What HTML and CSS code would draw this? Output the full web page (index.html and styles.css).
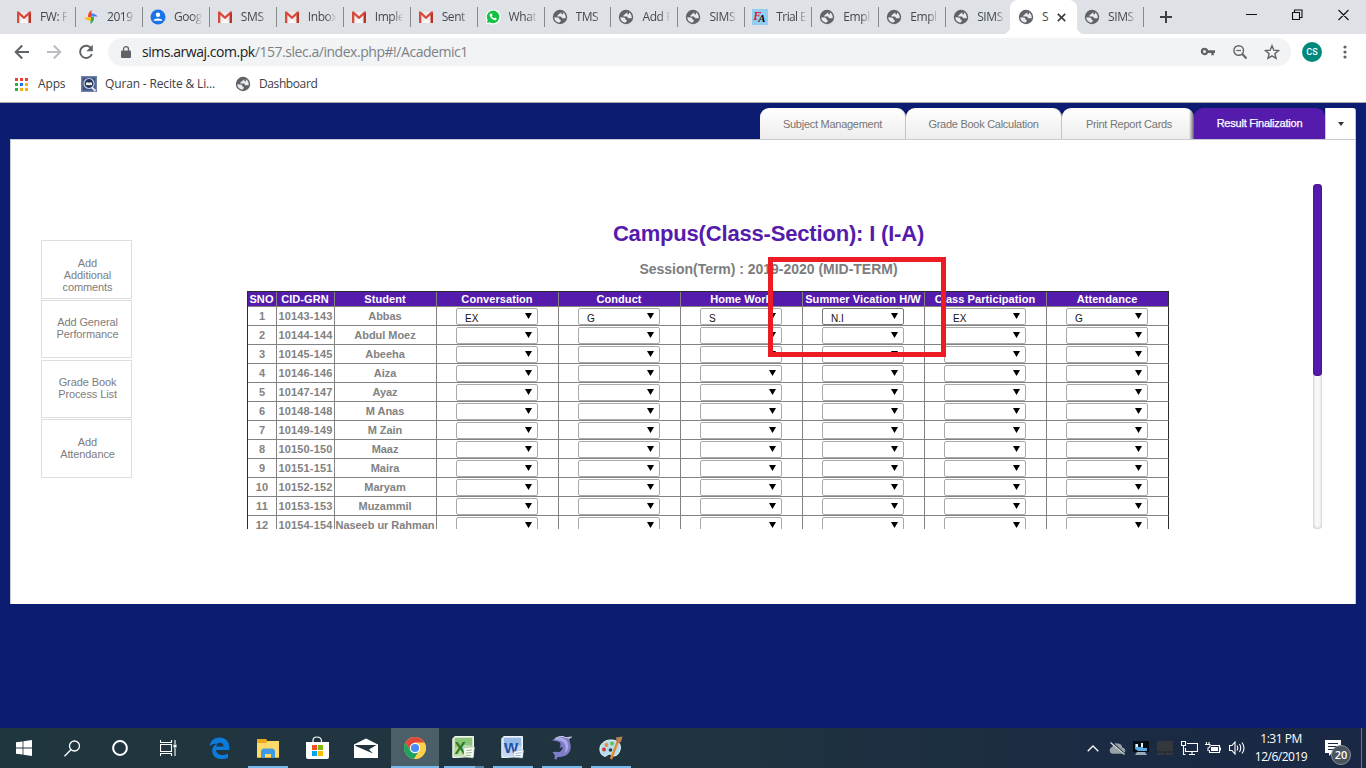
FILE: index.html
```html
<!DOCTYPE html>
<html lang="en">
<head>
<meta charset="utf-8">
<title>SIMS</title>
<link rel="stylesheet" href="styles.css">
</head>
<body>
<svg class="defs" aria-hidden="true">
  <symbol id="gmail" viewBox="0 0 16 16"><path d="M2 3h12v11H2z" fill="#eceaea"/><path d="M4 14l4-5 4 5z" fill="#fafafa"/><path d="M1 14V2.4h1.8L8 7.2l5.2-4.8H15V14h-2.3V6L8 10.2 3.3 6v8z" fill="#d84a3c"/><path d="M12.7 14V6L15 3.5V14z" fill="#b93327"/></symbol>
  <symbol id="globe" viewBox="0 0 16 16"><circle cx="8" cy="8" r="7.200" fill="#5f6368"/><path d="M9 2.300C9.300 4 8.300 4.600 7.200 4.700 6.500 5 6.800 6 5.700 6.200 4.800 6.500 5.200 7.500 6 7.500H8.600C9.800 7.600 9.300 9 10.300 9.200L13.700 9.300C14 6.500 12.800 4.300 11 3.200 11.500 5 10.700 5.800 9.600 5.300L9.300 4.300M2.300 8.300L5.500 8.600C6.900 8.700 7.700 9.600 7.500 10.800 8.700 10.800 9 11.300 8.700 12.200L7.300 13.700C4.500 13.300 2.300 11.500 2.300 8.300z" fill="#e8eaed"/></symbol>
  <symbol id="photos" viewBox="0 0 16 16"><path d="M8.500 1v7H5C5 4.500 6 3 8.500 1z" fill="#ea4335"/><path d="M8 7.500V4.500C11 4 13 5.500 15 7.500z" fill="#4285f4"/><path d="M7.500 8h3.500C11.500 11.500 10 13 7.500 15z" fill="#34a853"/><path d="M8 8.500v3C4.500 12 3 10.500 1 8.500z" fill="#fbbc04"/></symbol>
  <symbol id="contact" viewBox="0 0 16 16"><circle cx="8" cy="8" r="7.500" fill="#1a73e8"/><circle cx="8" cy="5.700" r="2.200" fill="#fff"/><path d="M3.700 11.800c0-3 8.600-3 8.600 0z" fill="#fff"/></symbol>
  <symbol id="whats" viewBox="0 0 16 16"><path d="M.5 15.500l1-4.200A7.500 7.500 0 1 1 4.800 14.700z" fill="#fff"/><circle cx="8.100" cy="7.900" r="6.300" fill="#14c144"/><path d="M2 14l1-4 3 3z" fill="#14c144"/><path d="M5.600 4.500l1.200.1.700 1.700-.7.900c.5 1 1.200 1.700 2.300 2.200l.9-.9 1.700.9c0 1.300-1 1.900-2.100 1.700C7 10.600 5 8.400 4.600 6.200c0-.8.400-1.400 1-1.700z" fill="#fff"/></symbol>
</svg>

<header class="tabstrip">
  <div class="tab"><svg class="fav"><use href="#gmail"/></svg><span>FW: F</span></div>
  <div class="tab"><svg class="fav"><use href="#photos"/></svg><span>2019</span></div>
  <div class="tab"><svg class="fav"><use href="#contact"/></svg><span>Goog</span></div>
  <div class="tab"><svg class="fav"><use href="#gmail"/></svg><span>SMS</span></div>
  <div class="tab"><svg class="fav"><use href="#gmail"/></svg><span>Inbox</span></div>
  <div class="tab"><svg class="fav"><use href="#gmail"/></svg><span>Imple</span></div>
  <div class="tab"><svg class="fav"><use href="#gmail"/></svg><span>Sent</span></div>
  <div class="tab"><svg class="fav"><use href="#whats"/></svg><span>What</span></div>
  <div class="tab"><svg class="fav"><use href="#globe"/></svg><span>TMS</span></div>
  <div class="tab"><svg class="fav"><use href="#globe"/></svg><span>Add F</span></div>
  <div class="tab"><svg class="fav"><use href="#globe"/></svg><span>SIMS</span></div>
  <div class="tab"><b class="fav fa"><i>F</i><em>A</em></b><span class="tight">Trial E</span></div>
  <div class="tab"><svg class="fav"><use href="#globe"/></svg><span>Empl</span></div>
  <div class="tab"><svg class="fav"><use href="#globe"/></svg><span>Empl</span></div>
  <div class="tab bare"><svg class="fav"><use href="#globe"/></svg><span>SIMS</span></div>
  <div class="tab active"><svg class="fav"><use href="#globe"/></svg><span>S</span><svg class="close" viewBox="0 0 8 8"><path d="M.7.7l6.600 6.600M7.300.7L.7 7.300" stroke="#3c4043" stroke-width="1.500"/></svg></div>
  <div class="tab"><svg class="fav"><use href="#globe"/></svg><span>SIMS</span></div>
  <svg class="plus" viewBox="0 0 12 12"><path d="M6 0v12M0 6h12" stroke="#3c4043" stroke-width="2"/></svg>
  <svg class="winctl" viewBox="0 0 138 30"><path d="M18 14.500h11M64.500 12.500h7v7h-7zM66.500 12v-2h7.500v7.500H72M110.500 10l10 10M120.500 10l-10 10" fill="none" stroke="#111" stroke-width="1.100"/></svg>
</header>

<div class="toolbar">
  <svg class="nav" viewBox="0 0 16 16"><path d="M15 8H2M8.200 1.500L1.700 8l6.500 6.500" fill="none" stroke="#5f6368" stroke-width="2"/></svg>
  <svg class="nav" viewBox="0 0 16 16"><path d="M1 8h13M7.800 1.500L14.300 8l-6.500 6.500" fill="none" stroke="#bbbdc0" stroke-width="2"/></svg>
  <svg class="nav" viewBox="0 0 16 16"><path d="M13.300 4.500A6.100 6.100 0 1 0 13.900 10" fill="none" stroke="#5f6368" stroke-width="2"/><path d="M14.800.8v6.500H8.300z" fill="#5f6368"/></svg>
  <div class="omnibox">
    <svg class="lock" viewBox="0 0 10 12"><path d="M1 4.500h8q1 0 1 1V11q0 1-1 1H1q-1 0-1-1V5.500q0-1 1-1z" fill="#5f6368"/><path d="M2.500 5V3a2.500 2.300 0 0 1 5 0v2" fill="none" stroke="#5f6368" stroke-width="1.300"/></svg>
    <span class="url"><b>sims.arwaj.com.pk</b>/157.slec.a/index.php#!/Academic1</span>
    <svg class="omni" viewBox="0 0 16 16"><circle cx="4.500" cy="7.500" r="2.600" fill="none" stroke="#5f6368" stroke-width="2.200"/><path d="M7.500 6.300H15V9h-1.200v2.200h-2.500V9H7.500z" fill="#5f6368"/></svg>
    <svg class="omni" viewBox="0 0 16 16"><circle cx="6.700" cy="6.500" r="4.800" fill="none" stroke="#5f6368" stroke-width="1.400"/><path d="M10.200 10l4.300 4.500" stroke="#5f6368" stroke-width="2"/><path d="M4.300 6.500h4.800" stroke="#5f6368" stroke-width="1.200"/></svg>
    <svg class="omni" viewBox="0 0 16 16"><path d="M8 1.800l1.800 4.400 4.700.4-3.600 3.100 1.100 4.600L8 11.800l-4 2.500 1.100-4.600L1.500 6.600l4.700-.4z" fill="none" stroke="#5f6368" stroke-width="1.400"/></svg>
  </div>
  <div class="avatar">CS</div>
  <svg class="dots" viewBox="0 0 4 14"><circle cx="2" cy="2" r="1.600"/><circle cx="2" cy="7" r="1.600"/><circle cx="2" cy="12" r="1.600"/></svg>
</div>

<div class="bookmarks">
  <svg class="apps" viewBox="0 0 13 13"><path d="M0 0h3v3H0zM5 0h3v3H5zM10 0h3v3h-3z" fill="#ea4335"/><path d="M0 5h3v3H0zM0 10h3v3H0z" fill="#34a853"/><path d="M5 5h3v3H5z" fill="#1a73e8"/><path d="M10 5h3v3h-3zM5 10h3v3H5zM10 10h3v3h-3z" fill="#f5ae0b"/></svg>
  <span class="bm-apps">Apps</span>
  <svg class="fav" viewBox="0 0 16 16"><path d="M0 0h16v16H0z" fill="#6e80ab"/><path d="M1.500 1.500h13v13h-13z" fill="#3f5282"/><circle cx="8" cy="7.500" r="5" fill="#24345f" stroke="#c3cde4" stroke-width="1.200"/><path d="M5 6.800q1.500-1 3 0 1.500-1 3 0v2.500q-1.500-.8-3 0-1.500-.8-3 0z" fill="#f4f1dc"/><path d="M11 11.500l3.500 3.500" stroke="#e6ebf5" stroke-width="1.800"/></svg>
  <span class="bm-quran">Quran - Recite &amp; Li...</span>
  <svg class="fav"><use href="#globe"/></svg>
  <span class="bm-dash">Dashboard</span>
</div>

<main class="page">
  <nav class="menu">
    <a class="t1">Subject Management</a><a class="t2">Grade Book Calculation</a><a class="t3">Print Report Cards</a><a class="t4">Result Finalization</a><a class="more"><i></i></a>
  </nav>
  <section class="panel">
    <aside class="side">
      <a class="s1">Add<br>Additional<br>comments</a>
      <a class="s2">Add General<br>Performance</a>
      <a class="s3">Grade Book<br>Process List</a>
      <a class="s4">Add<br>Attendance</a>
    </aside>
    <div class="report">
      <h1>Campus(Class-Section): I (I-A)</h1>
      <h2>Session(Term) : 2019-2020 (MID-TERM)</h2>
      <div class="clip">
        <table>
          <colgroup><col class="c1"><col class="c2"><col class="c3"><col span="6" class="c4"></colgroup>
          <thead><tr><th>SNO</th><th>CID-GRN</th><th>Student</th><th>Conversation</th><th>Conduct</th><th>Home Work</th><th>Summer Vication H/W</th><th>Class Participation</th><th>Attendance</th></tr></thead>
          <tbody id="rows"></tbody>
        </table>
      </div>
      <div class="marker"></div>
    </div>
    <div class="scroll"><i></i></div>
  </section>
</main>

<footer class="taskbar">
  <div class="slot"><svg width="16" height="16" viewBox="0 0 16 16" fill="#fff"><path d="M0 2.300L6.600 1.400V7.600H0zM7.400 1.300L16 0v7.600H7.400zM0 8.400h6.600v6.200L0 13.700zM7.400 8.400H16V16l-8.600-1.200z"/></svg></div>
  <div class="slot"><svg width="17" height="17" viewBox="0 0 17 17" fill="none" stroke="#fff" stroke-width="1.300"><circle cx="10.500" cy="6" r="5"/><path d="M6.900 9.700L.5 16.300"/></svg></div>
  <div class="slot"><svg width="18" height="18" viewBox="0 0 18 18"><circle cx="9" cy="9" r="6.900" fill="none" stroke="#fff" stroke-width="2"/></svg></div>
  <div class="slot"><svg width="17" height="16" viewBox="0 0 17 16" fill="none" stroke="#fff" stroke-width="1.100"><path d="M.5 0v2.500h11V0M.5 4.500h11v7H.5zM.5 16v-2.500h11V16M15 0v4M15 8v8"/><path d="M13.500 4.500h3v3h-3z" fill="#fff" stroke="none"/></svg></div>
  <div class="slot first"><svg width="21" height="22" viewBox="0 0 21 22"><path d="M.5 9.500C1.500 3.500 5.500.5 10.500.5c6 0 9.800 4.200 9.800 10v2.500H7c.2 3.500 3 5 6.500 5 2.200 0 4-.6 5.500-1.500v4.300c-1.800 1-4 1.400-6.500 1.400C7 22 3.200 18.800 3.200 14c0-3.500 1.800-6 4.800-7.300C4.500 6.500 2 7.500.5 9.500zm6.700 0h7.300c0-2.200-1.200-3.700-3.500-3.700S7.500 7.500 7.200 9.500z" fill="#0b7bdc"/></svg></div>
  <div class="slot open"><svg width="22" height="19" viewBox="0 0 22 19"><path d="M0 0h9l1.500 2H22v17H0z" fill="#e9a820"/><path d="M0 4h9l1.500-2H22v16H0z" fill="#ffda6b"/><path d="M4 19v-7.500L6 9.500h10l2 2V19h-4v-4H8v4z" fill="#3e9ae3"/></svg></div>
  <div class="slot"><svg width="23" height="24" viewBox="0 0 23 24"><path d="M7 7V4.500Q7 1 11 1t4.500 3.500V7" fill="none" stroke="#fff" stroke-width="1.200"/><path d="M0 6h23v15q0 2-2 2H2q-2 0-2-2z" fill="#fff"/><path d="M6 9h5v5H6z" fill="#f25022"/><path d="M12 9h5v5h-5z" fill="#7fba00"/><path d="M6 15h5v5H6z" fill="#00a4ef"/><path d="M12 15h5v5h-5z" fill="#ffb900"/></svg></div>
  <div class="slot"><svg width="24" height="20" viewBox="0 0 24 20"><path d="M0 6.500L12 .5l12 6V20H0z" fill="#fff"/><path d="M1.500 7h21L15 11.500l4 4L1.500 8z" fill="#21343d"/></svg></div>
  <div class="slot open current"><svg width="22" height="22" viewBox="0 0 22 22"><circle cx="11" cy="11" r="11" fill="#fdd04b"/><path d="M1.500 5.500A11 11 0 0 1 20.500 5.500H11L6.200 13.700z" fill="#e0483b"/><path d="M1.500 5.500A11 11 0 0 0 10 22l5-8.200H6.200z" fill="#1ca261"/><path d="M10 22A11 11 0 0 0 20.600 6H11l4.800 7.700z" fill="#fdd04b"/><circle cx="11" cy="11" r="5.200" fill="#fff"/><circle cx="11" cy="11" r="4.100" fill="#4a8cf6"/></svg></div>
  <div class="slot open multi"><svg class="office" width="23" height="23" viewBox="0 0 23 23"><path d="M3 .5h18.500v20L3 21.500H.8V2.500z" fill="#cfe6c6" stroke="#f0f8ec"/><path d="M3 2h17v9q-8-3-17 3z" fill="#8cc67a"/><path d="M2 13q8-6 18-3v9L2 20z" fill="#b9dcae"/><text x="2.500" y="17.500" class="glyph xl">X</text><path d="M12 12l10.500-1-1.500 11-9-1.500z" fill="#fff" stroke="#a9c99e" stroke-width=".6"/><path d="M14 14.500l6-.6M13.800 17l6-.4M13.500 19.200l5.500.2" stroke="#7eb46c" stroke-width=".9"/></svg></div>
  <div class="slot open"><svg class="office" width="23" height="23" viewBox="0 0 23 23"><path d="M3 .5h18.500v20L3 21.500H.8V2.500z" fill="#cfdff4" stroke="#eff5fd"/><path d="M3 2h17v9q-8-3-17 3z" fill="#96b9e6"/><path d="M2 13q8-6 18-3v9L2 20z" fill="#c3d7f2"/><text x="3" y="16.500" class="glyph wd">W</text><path d="M13 15.500l9.500-1.500-1 8-9-1z" fill="#fff" stroke="#a4b8d6" stroke-width=".6"/><path d="M14.500 17.500l6-.8M14.300 19.500h5.500" stroke="#8aa6cf" stroke-width=".9"/></svg></div>
  <div class="slot open"><svg width="22" height="24" viewBox="0 0 22 24"><path d="M0 4C2 4 3 3.300 4 2.500 7-.2 12 0 15 1.500L20.500 1C18.500 2.200 18 3.500 18.500 5c3 7 .5 14-7 15.500-2 .5-3.500.7-5 .5L5.500 23.500 3.500 23l.3-3.500L1.500 16l4-.2C9 17 11.500 14 11.800 11L8.500 12c1-1.500 1.300-3.500.5-5.500C6.500 5 3 5 0 4z" fill="#7f7cc8"/><path d="M3 3.500C7 .5 12 .8 15 4c3.500 4 3 10-1.500 13.500 2-4.500 1.500-9-1.500-11.500C9.500 4.200 6 4 3 3.500z" fill="#aaa9e4"/><path d="M4 2.500q4-2.500 8-2l3 1.300 5.500-.8-3 1.800" fill="none" stroke="#dcdcf5" stroke-width=".9"/></svg></div>
  <div class="slot open"><svg width="24" height="24" viewBox="0 0 24 24"><path d="M1 14.500C0 8 6 3.500 13 4c7 .5 9.500 5 8 10-1.200 4-3 5.500-6 6-2.500.5-3-2.500-5-2-2 1-3 3-5 2-2-.8-3.700-2.800-4-5.500z" fill="#b4dcec" stroke="#eef9fd"/><circle cx="5" cy="13.500" r="1.900" fill="#d8392e"/><circle cx="7.500" cy="9" r="1.900" fill="#f08a2c"/><circle cx="13" cy="7.500" r="1.900" fill="#5fbf4a"/><circle cx="11.500" cy="14" r="1.800" fill="#243b48"/><path d="M19 5L12 23" stroke="#e38b2c" stroke-width="2.400"/><path d="M17 1.500L23.500.5 22 6l-4 1.500z" fill="#b78257"/></svg></div>
  <div class="tray">
    <div class="ti"><svg width="12" height="7" viewBox="0 0 12 7"><path d="M.7 6.300L6 1l5.300 5.300" fill="none" stroke="#fff" stroke-width="1.300"/></svg></div>
    <div class="ti"><svg width="17" height="13" viewBox="0 0 17 13"><path d="M3.500 11.800a3.500 3.500 0 0 1-.2-6.800Q4.500 .5 8.500 1.500q4-.2 4.800 3.900 3.200.8 3 3.400-.3 3-3 3z" fill="#98a0a8"/><path d="M2 0l14 12.500" stroke="#1b2c40" stroke-width="2.200"/><path d="M1.500.5l14 12" stroke="#dce1e5" stroke-width="1.200"/></svg></div>
    <div class="ti"><svg width="16" height="14" viewBox="0 0 16 14"><path d="M0 0h16v11H0z" fill="#070b12"/><path d="M2 8V3h3v3h3V2h2v5h4v3H5z" fill="#5aa7e4"/><path d="M3 3h2v3H3zM8 2h2v4H8z" fill="#e8f4ff"/><path d="M4 11h8l2 3H2z" fill="#9caab6"/></svg></div>
    <div class="ti"><svg width="16" height="14" viewBox="0 0 16 14"><path d="M0 0h16v14H0z" fill="#33383d"/><path d="M0 11h16M8 11v3" stroke="#1f2428"/></svg></div>
    <div class="ti"><svg width="17" height="14" viewBox="0 0 17 14" fill="none" stroke="#fff" stroke-width="1.100"><path d="M6 2.500h10.500v8H4.500V7M8 13.500h6M11 10.500v3M.5.500h4v4h-4zM2.500 4.500v9h2"/></svg></div>
    <div class="ti"><svg width="16" height="13" viewBox="0 0 16 13"><path d="M6 3.500h8.500v7h-10V8M15.500 5.500v3M1.500 0v3M4 0v3M0 2.500h5v2q0 1-2 1.500v3" fill="none" stroke="#fff" stroke-width="1.100"/><path d="M6 5h7v4H6z" fill="#fff"/></svg></div>
    <div class="ti"><svg width="17" height="14" viewBox="0 0 17 14" fill="none" stroke="#fff" stroke-width="1.100"><path d="M.5 4.500H3l3-3.500v12L3 9.500H.5zM8 4.500q1.500 2.500 0 5M10.500 3q2.500 4 0 8M13 1.500q4 5.500 0 11"/></svg></div>
    <div class="clock"><span>1:31 PM</span><span>12/6/2019</span></div>
    <div class="notif"><svg width="17" height="17" viewBox="0 0 17 17"><path d="M0 0h16v13H7l-3 3v-3H0z" fill="#fff"/><path d="M3 3.500h10M3 6.500h10M3 9.500h7" stroke="#1a2940" stroke-width="1.200"/></svg><span>20</span></div>
    <i class="peek"></i>
  </div>
</footer>
<script src="rows.js"></script>
</body>
</html>
```

FILE: rows.js
```js
const students = ["Abbas", "Abdul Moez", "Abeeha", "Aiza", "Ayaz", "M Anas", "M Zain",
  "Maaz", "Maira", "Maryam", "Muzammil", "Naseeb ur Rahman"];
const firstRow = ["EX", "G", "S", "N.I", "EX", "G"];

document.getElementById("rows").innerHTML = students.map((name, i) => {
  const picks = firstRow.map((grade, k) =>
    `<td><div class="pick${i === 0 && k === 3 ? " focus" : ""}"><span>${i === 0 ? grade : ""}</span><i></i></div></td>`).join("");
  return `<tr><td>${i + 1}</td><td>${10143 + i}-${143 + i}</td><td class="name">${name}</td>${picks}</tr>`;
}).join("");
```

FILE: styles.css
```css
* { box-sizing: border-box; }
body {
  margin: 0; width: 1366px; height: 768px; overflow: hidden;
  display: flex; flex-direction: column; background: #0c1c70;
  font-family: "Liberation Sans", Arial, sans-serif;
}
svg { display: block; flex: none; }
.defs { position: absolute; width: 0; height: 0; }

/* browser chrome */
.tabstrip { height: 34px; flex: none; background: #dee1e6; display: flex; padding-left: 9px; font-family: "Open Sans", sans-serif; }
.tab { width: 66.95px; flex: none; display: flex; align-items: center; padding-left: 7px; position: relative; }
.tab::after { content: ""; width: 1px; height: 20px; background: #85888c; margin-left: auto; }
.tab.bare::after, .tab.active::after { display: none; }
.tab > span {
  width: 29px; margin-left: 8px; overflow: hidden; white-space: nowrap; color: #45494d;
  font-size: 12px; letter-spacing: -.4px; line-height: 18px;
  -webkit-mask-image: linear-gradient(90deg, #000 62%, transparent 98%);
}
.tab > .tight { width: 34px; letter-spacing: -.6px; -webkit-mask-image: linear-gradient(90deg, #000 62%, transparent 90%); }
.fav { width: 16px; height: 16px; flex: none; }
.fa { background: #93cdf4; font: bold 13px/14px "Liberation Serif", serif; letter-spacing: -1px; white-space: nowrap; padding-left: 1px; }
.fa i { color: #d32331; font-size: 12px; }
.fa em { color: #111; position: relative; top: 2px; left: -2px; font-size: 11px; }
.tab.active { background: #fff; border-radius: 8px 8px 0 0; margin: 0 0 0 -3px; width: 67px; padding-left: 8px; }
.tab.active::before {
  content: ""; position: absolute; left: -8px; right: -8px; bottom: 0; height: 8px;
  background: radial-gradient(circle at 0 0, transparent 8px, #fff 8.500px) 0 0 / 8px 8px no-repeat,
    radial-gradient(circle at 100% 0, transparent 8px, #fff 8.500px) 100% 0 / 8px 8px no-repeat;
}
.tab.active > span { width: 9px; margin-left: 8px; -webkit-mask-image: none; }
.close { width: 9px; height: 9px; margin-left: 6px; }
.plus { width: 12px; height: 12px; margin: 11px 0 0 16px; }
.winctl { width: 138px; height: 30px; margin-left: auto; }

.toolbar { height: 36px; flex: none; background: #fff; display: flex; align-items: center; padding-left: 14px; }
.nav { width: 16px; height: 16px; margin-right: 16px; }
.omnibox { width: 1183px; height: 28px; margin-left: -2px; border-radius: 14px; background: #f1f3f4; display: flex; align-items: center; padding: 0 11px 0 13px; }
.lock { width: 10px; height: 12px; }
.url { margin: 0 auto 0 11px; font: 14px/20px "Open Sans", sans-serif; letter-spacing: -.46px; color: #7d8185; white-space: nowrap; }
.url b { font-weight: 400; color: #202124; }
.omni { width: 16px; height: 16px; margin-left: 16px; }
.avatar { width: 20px; height: 20px; margin-left: 11px; border-radius: 50%; background: #00897b; color: #fff; text-align: center; font: 500 9px/20px Roboto, sans-serif; }
.dots { width: 4px; height: 14px; margin-left: 21px; fill: #5f6368; }

.bookmarks { height: 33px; flex: none; background: #fff; border-bottom: 1px solid #a9a9ad; display: flex; align-items: center; padding: 0 0 4px 15px; font: 12px/18px "Open Sans", sans-serif; letter-spacing: -.15px; color: #3c4043; white-space: nowrap; }
.apps { width: 13px; height: 13px; margin-right: 10px; }
.bm-apps { width: 43px; }
.bm-quran { width: 130px; }
.bookmarks .bm-dash { letter-spacing: -.4px; }
.bookmarks .fav + span { margin-left: 8px; }

/* application page */
.page { height: 625px; flex: none; padding: 5px 10px 0; }
.menu { height: 31px; display: flex; justify-content: flex-end; font-size: 11px; letter-spacing: -.27px; color: #757575; }
.menu a { height: 31px; line-height: 32px; text-align: center; background: linear-gradient(#fff, #ededed); border-radius: 9px 9px 0 0; border-right: 1px solid #c4c4c4; white-space: nowrap; }
.t1 { width: 146px; }
.t2 { width: 156px; }
.t3 { width: 132px; }
.menu .t3 { border-right: 0; padding-left: 2px; background: linear-gradient(90deg, transparent 127px, #222222b0 132px), linear-gradient(#fff, #ededed); }
.menu .t4 { width: 131px; background: #541bac; color: #fff; line-height: 30px; border: 0; letter-spacing: -.22px; -webkit-text-stroke: .25px #fff; }
.menu .more { width: 31px; background: #fff; border-radius: 0 3px 0 0; border-left: 1px solid #ccc; display: flex; align-items: center; justify-content: center; }
.more i { border: 3.5px solid transparent; border-top: 4px solid #333; border-bottom: 0; margin-top: 1px; }
.panel { height: 465px; background: #fff; border: 1px solid #c9cbd4; border-width: 1px 1px 0; display: flex; }
.side { width: 91px; margin: 100px 0 0 30px; font-size: 11px; line-height: 12px; letter-spacing: -.1px; color: #7d7d7d; text-align: center; }
.side a { display: block; width: 91px; height: 58px; border: 1px solid #ddd; padding: 15px 0 0 2px; margin-bottom: 2px; }
.side .s1 { height: 59px; margin-bottom: 1px; padding-top: 16px; }
.side .s3 { margin-bottom: 1px; }
.side .s4 { height: 59px; padding-top: 16px; }
.report { width: 922px; margin-left: 115px; position: relative; }
h1, h2 { margin: 0; padding-left: 121px; text-align: center; white-space: nowrap; }
h1 { margin-top: 80px; font-size: 22px; line-height: 27px; letter-spacing: -.18px; color: #541bac; }
h2 { margin-top: 13px; font-size: 14px; line-height: 18px; letter-spacing: -.02px; color: #7d7d7d; }
.clip { height: 238px; margin-top: 13px; overflow: hidden; }
table { width: 922px; table-layout: fixed; border-collapse: separate; border-spacing: 0; border: 1px solid #2b2b2b; border-right: 0; font-size: 11px; font-weight: bold; color: #828282; text-align: center; }
.c1 { width: 29px; }
.c2 { width: 58px; }
.c3 { width: 102px; }
.c4 { width: 122px; }
th, td { padding: 0; border-right: 1px solid #828282; border-bottom: 1px solid #828282; white-space: nowrap; }
th:last-child, td:last-child { border-right-color: #2b2b2b; }
th { height: 15px; line-height: 14px; padding-right: 1px; letter-spacing: .08px; background: #541bac; color: #fff; }
td { height: 19px; line-height: 16px; padding-bottom: 1px; letter-spacing: .13px; }
.name { padding-right: 1px; letter-spacing: -.04px; }
.pick { width: 82px; height: 17px; margin: 1px 0 0 19px; border: 1px solid #a9a9a9; border-radius: 2px; display: flex; justify-content: space-between; padding: 0 5px 0 8px; font: 10px/19px "Liberation Sans", Arial, sans-serif; letter-spacing: 0; color: #111; }
.pick.focus { border-color: #777; }
.pick i { width: 7px; height: 6px; margin-top: 4px; background: #000; clip-path: polygon(0 0, 100% 0, 50% 100%); }
td:nth-child(n+4) { padding: 0; }
.marker { position: absolute; left: 521px; top: 117px; width: 178px; height: 100px; border: 5px solid #ed1c24; }
.scroll { width: 9px; height: 345px; margin: 44px 0 0 144px; border-radius: 4px; background: #f7f7f7; box-shadow: inset 0 0 3px #aaa; }
.scroll i { display: block; height: 192px; border-radius: 4px; background: #541bac; box-shadow: inset 0 0 2px #32106a; }

/* desktop taskbar */
.taskbar { height: 40px; flex: none; display: flex; background: linear-gradient(90deg, #20363f, #20343f 50%, #1b2b43 80%, #1a2844); font-family: "Open Sans", sans-serif; color: #fff; }
.slot { width: 48px; flex: none; display: flex; align-items: center; justify-content: center; position: relative; }
.slot.first { margin-left: 3px; }
.slot.first ~ .slot { margin-left: 1px; }
.open::after { content: ""; position: absolute; left: 4px; width: 40px; bottom: 0; height: 2px; background: #76b9ed; }
.current { background: #4a5f67; }
.current::after { left: 0; width: 48px; }
.multi::after { background: linear-gradient(90deg, #76b9ed 31px, #5484a8 31px); }
.office { margin: 0 2px 1px 0; }
.glyph { font: bold 15px "Liberation Sans", Arial, sans-serif; }
.xl { fill: #2c7a22; font-size: 17px; }
.wd { fill: #1c50a6; font-size: 15px; }
.tray { margin-left: auto; display: flex; }
.ti { width: 24px; display: flex; align-items: center; justify-content: center; }
.clock { width: 64px; display: flex; flex-direction: column; align-items: center; padding-top: 2px; font-size: 12px; line-height: 18px; letter-spacing: -.5px; white-space: nowrap; }
.notif { width: 48px; padding: 12px 0 0 12px; position: relative; }
.notif span { position: absolute; left: 18px; top: 17px; width: 20px; height: 20px; border-radius: 50%; background: #4b545c; border: 1px solid #8a9299; text-align: center; font-size: 11px; font-weight: 600; line-height: 18px; }
.peek { width: 1px; margin-right: 4px; background: #6c7685; }
```
